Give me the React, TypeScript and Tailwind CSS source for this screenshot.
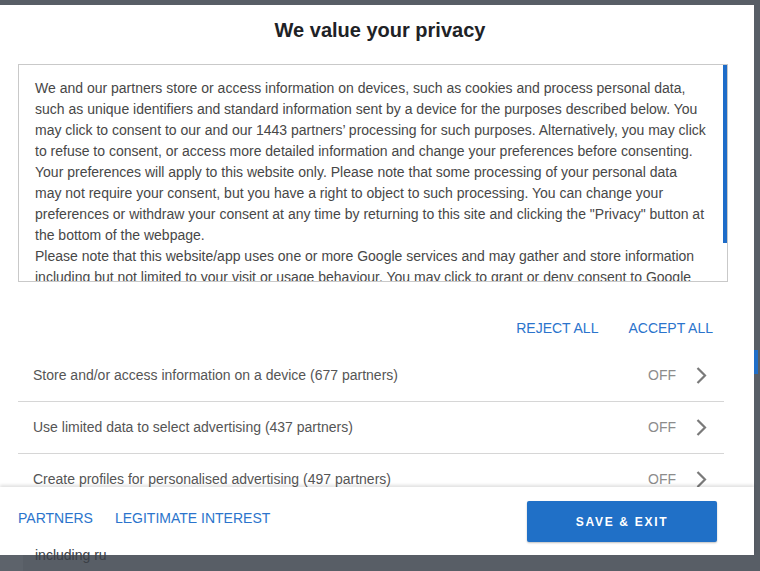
import React from "react";

const purposes = [
  "Store and/or access information on a device (677 partners)",
  "Use limited data to select advertising (437 partners)",
  "Create profiles for personalised advertising (497 partners)",
  "Use profiles to select personalised advertising (493 partners)",
];

function Chevron() {
  return (
    <svg width="13" height="19" viewBox="0 0 13 19" fill="none" className="shrink-0">
      <path d="M2.5 2 L10 9.5 L2.5 17" stroke="#7a7a7a" strokeWidth="2.2" strokeLinecap="butt" />
    </svg>
  );
}

export default function App() {
  return (
    <div className="relative h-[571px] w-[760px] overflow-hidden bg-[#585e66] font-['Liberation_Sans',Arial,sans-serif]">
      {/* page behind the overlay */}
      <div className="absolute left-[754px] top-[350px] h-[24px] w-[4px] bg-[#1f6ec8]" />
      <div className="absolute bottom-0 left-0 top-[555px] w-[23px] bg-[#5d636b]" />

      <div className="mt-[5px] flex h-[550px] w-[754px] flex-col bg-white">
        <h1 className="pl-[6px] pt-[12px] text-center text-[20px] font-bold leading-[26px] text-[#1e2226]">
          We value your privacy
        </h1>

        <div className="relative ml-[18px] mt-[21px] h-[218px] w-[710px] shrink-0 overflow-hidden border border-[#c9c9c9]">
          <div className="pl-[16px] pt-[13px] text-[14px] leading-[21px] text-[#474747]">
            <p>
              We and our partners store or access information on devices, such as cookies and process personal data,
              <br />
              such as unique identifiers and standard information sent by a device for the purposes described below. You
              <br />
              may click to consent to our and our 1443 partners’ processing for such purposes. Alternatively, you may click
              <br />
              to refuse to consent, or access more detailed information and change your preferences before consenting.
              <br />
              Your preferences will apply to this website only. Please note that some processing of your personal data
              <br />
              may not require your consent, but you have a right to object to such processing. You can change your
              <br />
              preferences or withdraw your consent at any time by returning to this site and clicking the "Privacy" button at
              <br />
              the bottom of the webpage.
            </p>
            <p>
              Please note that this website/app uses one or more Google services and may gather and store information
              <br />
              including but not limited to your visit or usage behaviour. You may click to grant or deny consent to Google
              <br />
              and its third-party partners for these purposes.
            </p>
          </div>
          <div className="absolute right-0 top-0 h-[178px] w-[4px] bg-[#1e6cc8]" />
        </div>

        <div className="min-h-0 flex-1 overflow-hidden">
          <div className="mt-[34px] flex h-[24px] items-center justify-end gap-[30px] pr-[41px] text-[14px] text-[#2b74cc]">
            <button>REJECT ALL</button>
            <button>ACCEPT ALL</button>
          </div>

          <ul className="ml-[18px] mt-[10px] w-[706px]">
            {purposes.map((p) => (
              <li
                key={p}
                className="flex h-[52px] items-center border-b border-[#d6d6d6] pl-[15px] pr-[16px] text-[14px] text-[#555]"
              >
                <span className="flex-1">{p}</span>
                <span className="mr-[19px] text-[#8c8c8c]">OFF</span>
                <Chevron />
              </li>
            ))}
          </ul>
        </div>

        <div className="relative flex h-[68px] shrink-0 items-start bg-white pl-[18px] pr-[37px] shadow-[0_-2px_3px_rgba(0,0,0,0.12)]">
          <div className="flex items-start gap-[22px] pt-[21px] text-[14px] leading-[20px] text-[#2b74cc]">
            <button>PARTNERS</button>
            <button>LEGITIMATE INTEREST</button>
          </div>
          <button className="ml-auto mt-[14px] h-[41px] w-[190px] rounded-[2px] bg-[#2070c7] text-[12px] font-bold tracking-[1.7px] text-white shadow-[0_1px_2px_rgba(0,0,0,0.25)]">
            SAVE &amp; EXIT
          </button>
        </div>
      </div>

      <div className="absolute left-[35px] top-[545px] text-[14px] leading-[20px] text-[#3b4046]">including ru</div>
    </div>
  );
}
